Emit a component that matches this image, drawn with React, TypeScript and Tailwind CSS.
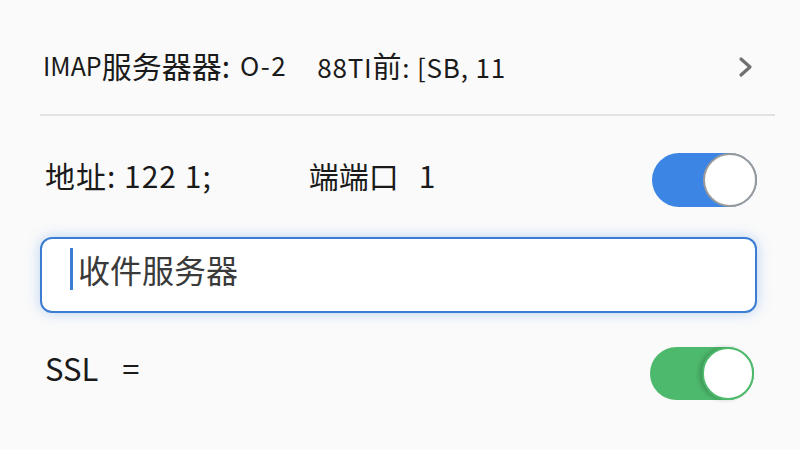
import type { JSX } from 'react'

function Toggle({ color }: { color: 'blue' | 'green' }): JSX.Element {
  const track = color === 'blue' ? 'bg-[#3d85e4] w-[105px] h-[54px]' : 'bg-[#4db96c] w-[104px] h-[53px]'
  const knob =
    color === 'blue'
      ? 'h-[54px] w-[54px] border-[2.5px] border-[#9a9a9a]'
      : 'h-[53px] w-[52px] border-[2px] border-[#4db96c] shadow-[-3px_0_4px_rgba(0,0,0,0.18)]'
  return (
    <div className={`flex shrink-0 items-center justify-end rounded-full ${track}`}>
      <div className={`rounded-full bg-white ${knob}`} />
    </div>
  )
}

export default function App(): JSX.Element {
  return (
    <div
      className="flex h-[450px] w-[800px] flex-col overflow-hidden bg-[#fafafa] pl-[40px] pr-[25px] pt-[40px] text-[#1a1a1a]"
      style={{ fontFamily: '"Noto Sans CJK SC", sans-serif' }}
    >
      {/* IMAP server summary */}
      <div className="flex h-[76px] items-center border-b-2 border-[#e2e2e2] pb-[20px] pl-[3px] pr-[21px] leading-none">
        <div className="-mt-[4px] flex items-center">
          <span className="text-[25px]">IMAP</span>
          <span className="text-[30px]">服务器器:</span>
          <span className="ml-[10px] text-[26px] tracking-[1.5px]">O-2</span>
          <span className="ml-[30px] text-[26px] tracking-[0.8px]">
            88TI<span className="text-[29px]">前</span>: [SB, 11
          </span>
        </div>
        <svg className="ml-auto" width="16" height="22" viewBox="0 0 16 22" fill="none">
          <path d="M3 3 L12 11 L3 19" stroke="#707070" strokeWidth="3.2" strokeLinecap="round" strokeLinejoin="round" />
        </svg>
      </div>

      {/* address / port */}
      <div className="mt-[37px] flex h-[54px] items-center pl-[5px] pr-[18px] text-[30px] leading-none">
        <span className="-mt-[10px] tracking-[1px]">地址: 122 1;</span>
        <span className="-mt-[10px] ml-[97px]">
          端端口<span className="ml-[20px]">1</span>
        </span>
        <div className="ml-auto">
          <Toggle color="blue" />
        </div>
      </div>

      {/* incoming server input */}
      <div className="mt-[30px] flex h-[76px] w-[717px] items-center rounded-[12px] border-[2.5px] border-[#3b7dd2] bg-white pl-[28px] shadow-[0_0_14px_rgba(70,140,230,0.35)]">
        <div className="-mt-[12px] h-[42px] w-[3px] bg-[#3b7dd2]" />
        <span className="-mt-[12px] ml-[5px] text-[32px] leading-none text-[#3a3a3a]">收件服务器</span>
      </div>

      {/* SSL */}
      <div className="mt-[34px] flex h-[53px] items-center pl-[5px] pr-[21px] text-[31px] leading-none">
        <span className="-mt-[12px]">SSL</span>
        <span className="-mt-[12px] ml-[24px]">=</span>
        <div className="ml-auto">
          <Toggle color="green" />
        </div>
      </div>
    </div>
  )
}
